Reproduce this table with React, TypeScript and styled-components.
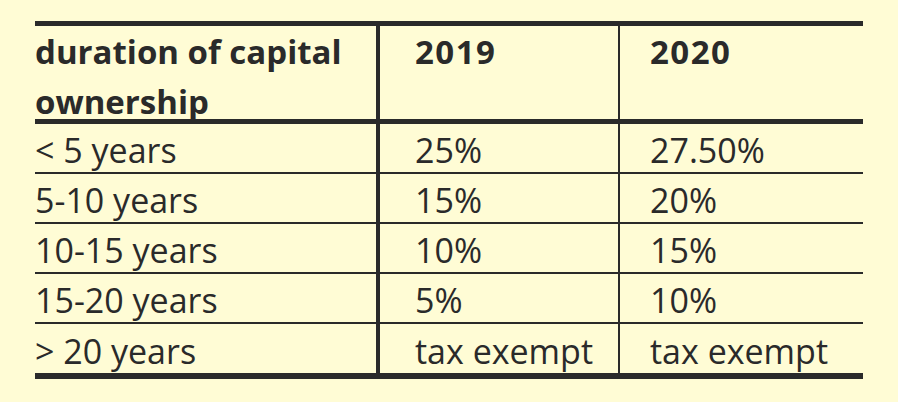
import styled, { createGlobalStyle } from "styled-components"

const GlobalStyle = createGlobalStyle`
	html, body {
		margin: 0;
		padding: 0;
		background: #fffcd5;
	}
`

const Page = styled.div`
	width: 898px;
	height: 402px;
	padding: 21px 0 0 35px;
	box-sizing: border-box;
	background: #fffcd5;
	font-family: "Open Sans", "Noto Sans", sans-serif;
	color: #2a2a2a;
`

const Table = styled.table`
	width: 828px;
	border-collapse: collapse;
	table-layout: fixed;
	border-top: 5px solid #2a2a2a;
	border-bottom: 6px solid #2a2a2a;
`

const padFor = (col: number) => (col === 0 ? 0 : col === 1 ? 35 : 30)
const lineFor = (col: number) => (col === 0 ? "4px" : col === 1 ? "2px" : "0")

const HeadCell = styled.th<{ $col: number }>`
	text-align: left;
	vertical-align: top;
	font-weight: 700;
	font-size: 33px;
	padding: 0 0 0 ${(p) => padFor(p.$col)}px;
	border-bottom: 5px solid #2a2a2a;
	border-right: ${(p) => lineFor(p.$col)} solid #2a2a2a;
`

const HeadText = styled.div<{ $wide?: boolean }>`
	height: 92px;
	padding-top: 1px;
	line-height: 50px;
	letter-spacing: ${(p) => (p.$wide ? "1.5px" : "0")};
`

const Cell = styled.td<{ $col: number }>`
	font-size: 34px;
	line-height: 44px;
	height: 44px;
	padding: 4px 0 0 ${(p) => padFor(p.$col)}px;
	white-space: nowrap;
	border-right: ${(p) => lineFor(p.$col)} solid #2a2a2a;
`

const Row = styled.tr`
	border-bottom: 2px solid #2a2a2a;

	&:last-child {
		border-bottom: none;
	}

	&:last-child td {
		height: 45px;
	}
`

const rows = [
	["< 5 years", "25%", "27.50%"],
	["5-10 years", "15%", "20%"],
	["10-15 years", "10%", "15%"],
	["15-20 years", "5%", "10%"],
	["> 20 years", "tax exempt", "tax exempt"],
]

const App = () => {
	return (
		<Page>
			<GlobalStyle />
			<Table>
				<colgroup>
					<col style={{ width: 343 }} />
					<col style={{ width: 241 }} />
					<col style={{ width: 244 }} />
				</colgroup>
				<thead>
					<tr>
						<HeadCell $col={0}>
							<HeadText>duration of capital ownership</HeadText>
						</HeadCell>
						<HeadCell $col={1}>
							<HeadText $wide>2019</HeadText>
						</HeadCell>
						<HeadCell $col={2}>
							<HeadText $wide>2020</HeadText>
						</HeadCell>
					</tr>
				</thead>
				<tbody>
					{rows.map((row, i) => (
						<Row key={i}>
							{row.map((value, j) => (
								<Cell key={j} $col={j}>
									{value}
								</Cell>
							))}
						</Row>
					))}
				</tbody>
			</Table>
		</Page>
	)
}

export default App
